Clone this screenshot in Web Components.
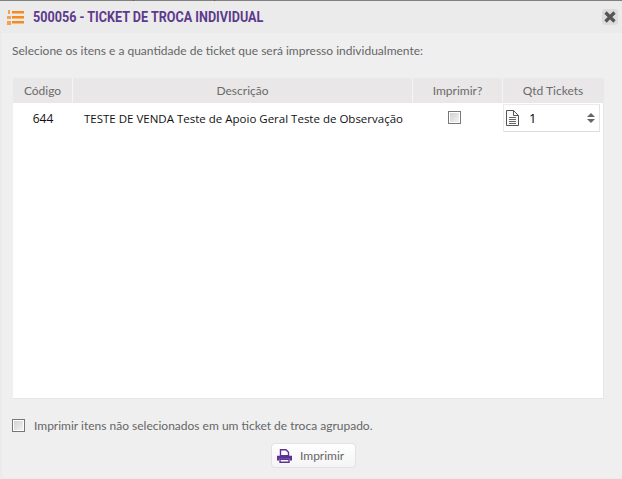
<!DOCTYPE html>
<html>
<head>
<meta charset="utf-8">
<style>
  html, body { margin: 0; height: 100%; background: #fff; }
  body { font-family: 'Lato', sans-serif; }
</style>
</head>
<body>
<ticket-dialog>
  <span slot="title">500056 - TICKET DE TROCA INDIVIDUAL</span>
  <span slot="intro">Selecione os itens e a quantidade de ticket que será impresso individualmente:</span>
  <ticket-table></ticket-table>
  <span slot="agrupado">Imprimir itens não selecionados em um ticket de troca agrupado.</span>
</ticket-dialog>

<script>
class TicketCheck extends HTMLElement {
  constructor() {
    super();
    this.attachShadow({ mode: 'open' });
  }

  connectedCallback() {
    this.shadowRoot.innerHTML = `
      <style>
        :host {
          display: inline-block;
          width: 13px;
          height: 13px;
          box-sizing: border-box;
          border: 1px solid #777;
          background: #fff;
          padding: 1px;
        }
        .in {
          height: 100%;
          background: linear-gradient(135deg, #d2d2d2, #f2f2f2);
        }
      </style>
      <div class="in"></div>
    `;
  }
}

class TicketQty extends HTMLElement {
  constructor() {
    super();
    this.attachShadow({ mode: 'open' });
  }

  connectedCallback() {
    this.shadowRoot.innerHTML = `
      <style>
        :host {
          display: flex;
          align-items: center;
          box-sizing: border-box;
          width: 97px;
          height: 28px;
          background: #fff;
          border: 1px solid #ececec;
          border-bottom-color: #dcdcdc;
          border-right-color: #e2e2e2;
          padding: 0 4px 0 2px;
          font: 12px 'Open Sans', sans-serif;
          color: #000;
        }
        svg { display: block; flex: none; }
        .val { margin-left: 10px; flex: 1; font-size: 13px; }
      </style>
      <svg width="13" height="16" viewBox="0 0 13 16" fill="none" stroke="#555">
        <path d="M.5.5h7l5 5v10H.5z" fill="#fafafa"/>
        <path d="M7.5.5v5h5" />
        <path d="M3 7.5h7M3 9.5h7M3 11.5h7M3 13.5h7" stroke="#666"/>
      </svg>
      <span class="val">1</span>
      <svg width="8" height="10" viewBox="0 0 8 10" fill="#666">
        <path d="M4 0 8 4H0zM4 10 0 6h8z"/>
      </svg>
    `;
  }
}

class TicketTable extends HTMLElement {
  constructor() {
    super();
    this.attachShadow({ mode: 'open' });
  }

  connectedCallback() {
    this.shadowRoot.innerHTML = `
      <style>
        :host {
          display: block;
          height: 320px;
          margin: 0 18px 0 11px;
          background: #fff;
          border-bottom: 1px solid #e6e6e6;
          border-right: 1px solid #e8e8e8;
          box-sizing: content-box;
        }
        .row {
          display: grid;
          grid-template-columns: 60px 340px 90px 100px;
        }
        .head {
          height: 25px;
          background: #e9e7e7;
          color: #6b6b6b;
          font: 12px 'Lato', sans-serif;
        }
        .head div {
          display: flex;
          align-items: center;
          justify-content: center;
          border-right: 1px solid #f5f5f5;
        }
        .head div:last-child { border-right: 0; }
        .body { height: 30px; color: #111; font: 11.5px 'Open Sans', sans-serif; }
        .body div { display: flex; align-items: center; }
        .cod { justify-content: center; font-size: 12px; }
        .desc { padding-left: 11px; white-space: nowrap; }
        .chk { justify-content: center; padding: 0 8px 2px 0; }
        .qtd { padding-left: 0; }
      </style>
      <div class="row head">
        <div>Código</div>
        <div>Descrição</div>
        <div>Imprimir?</div>
        <div>Qtd Tickets</div>
      </div>
      <div class="row body">
        <div class="cod">644</div>
        <div class="desc">TESTE DE VENDA Teste de Apoio Geral Teste de Observação</div>
        <div class="chk"><ticket-check></ticket-check></div>
        <div class="qtd"><ticket-qty></ticket-qty></div>
      </div>
    `;
  }
}

class TicketDialog extends HTMLElement {
  constructor() {
    super();
    this.attachShadow({ mode: 'open' });
  }

  connectedCallback() {
    this.shadowRoot.innerHTML = `
      <style>
        :host {
          display: flex;
          flex-direction: column;
          height: 479px;
          box-sizing: border-box;
          background: #ebebeb;
          overflow: hidden;
          color: #666;
        }
        .edge {
          height: 1px;
          flex: none;
          background:
            linear-gradient(#a33, #a33) 133px 0 / 1px 1px no-repeat,
            linear-gradient(#a33, #a33) 214px 0 / 1px 1px no-repeat,
            #808080;
        }
        header {
          display: flex;
          align-items: center;
          height: 32px;
          flex: none;
          padding: 0 4px 0 7px;
        }
        .title {
          margin-left: 9px;
          flex: 1;
          font: bold 15px 'Roboto', sans-serif;
          color: #5c3a8c;
          white-space: nowrap;
          transform: scaleX(.84);
          transform-origin: left center;
        }
        .close {
          width: 16px;
          height: 16px;
          background: #dcdcdc;
          border-radius: 3px;
          display: flex;
          align-items: center;
          justify-content: center;
        }
        svg { display: block; }
        main {
          flex: 1;
          display: flex;
          flex-direction: column;
          background: #efefef;
          margin: 0 0 1px 2px;
          border-radius: 0 0 4px 4px;
        }
        .intro {
          height: 45px;
          flex: none;
          padding: 10px 0 0 10px;
          box-sizing: border-box;
          font-size: 12px;
          white-space: nowrap;
          line-height: 16px;
        }
        .opt {
          display: flex;
          align-items: center;
          gap: 9px;
          margin: 18px 0 0 10px;
          font-size: 12px;
          height: 16px;
        }
        .foot {
          display: flex;
          justify-content: center;
          margin-top: 10px;
          padding-left: 3px;
        }
        button {
          display: flex;
          align-items: center;
          gap: 8px;
          width: 85px;
          height: 25px;
          box-sizing: border-box;
          padding: 0 0 0 5px;
          background: linear-gradient(#fff, #f4f4f4);
          border: 1px solid #e2e2e2;
          border-radius: 4px;
          font: 12px 'Lato', sans-serif;
          color: #666;
        }
      </style>
      <div class="edge"></div>
      <header>
        <svg width="17" height="15" viewBox="0 0 17 15" fill="#f58a1f">
          <path d="M5 1h12v2.4H5zM5 6h12v2.4H5zM5 11h12v2.4H5z"/>
          <path d="M1 0h2v4H1zM0 6h4v3H0zM0 11h4v4H0z" opacity=".75"/>
        </svg>
        <div class="title"><slot name="title"></slot></div>
        <div class="close">
          <svg width="12" height="12" viewBox="0 0 12 12" stroke="#555" stroke-width="3.2">
            <path d="M1.5 1.5l9 9M10.5 1.5l-9 9"/>
          </svg>
        </div>
      </header>
      <main>
        <div class="intro"><slot name="intro"></slot></div>
        <slot></slot>
        <div class="opt"><ticket-check></ticket-check><slot name="agrupado"></slot></div>
        <div class="foot">
          <button>
            <svg width="15" height="14" viewBox="0 0 15 14">
              <path d="M3.5.7h5.5l2.5 2.5v3.5h-8z" fill="#fff" stroke="#5b3392" stroke-width="1.4"/>
              <path d="M0 6.7h15v4.8h-2V9.8H2v1.7H0z" fill="#5b3392"/>
              <path d="M3 10.3h9v3H3z" fill="#fff" stroke="#5b3392" stroke-width="1.4"/>
            </svg>
            Imprimir
          </button>
        </div>
      </main>
    `;
  }
}

customElements.define('ticket-check', TicketCheck);
customElements.define('ticket-qty', TicketQty);
customElements.define('ticket-table', TicketTable);
customElements.define('ticket-dialog', TicketDialog);
</script>
</body>
</html>
